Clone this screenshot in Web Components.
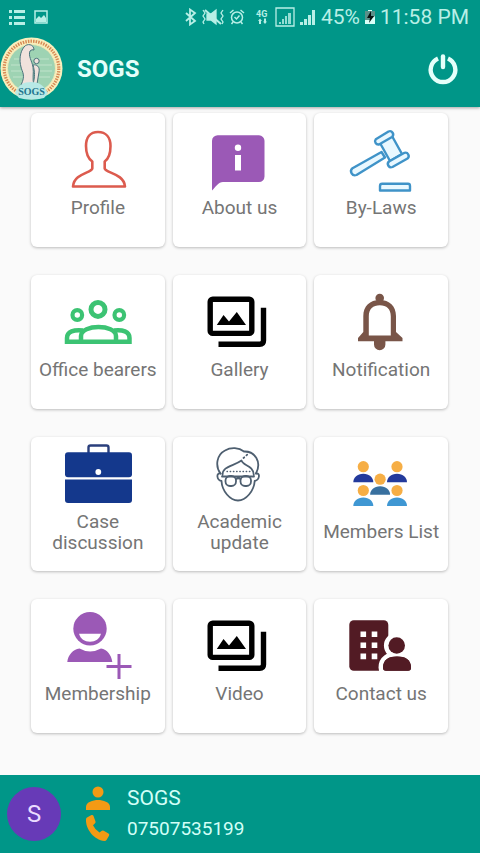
<!DOCTYPE html>
<html lang="en">
<head>
<meta charset="utf-8">
<meta name="viewport" content="width=device-width, initial-scale=1">
<title>SOGS</title>
<style>
    body {
        margin: 0;
        font-family: Roboto, "Liberation Sans", sans-serif;
        background: #fafafa;
    }
</style>
</head>
<body>
<sogs-app>
    <status-bar slot="header" battery="45%" time="11:58 PM"></status-bar>
    <app-bar slot="header">SOGS</app-bar>
    <menu-card icon="profile">Profile</menu-card>
    <menu-card icon="about">About us</menu-card>
    <menu-card icon="laws">By-Laws</menu-card>
    <menu-card icon="bearers">Office bearers</menu-card>
    <menu-card icon="gallery">Gallery</menu-card>
    <menu-card icon="bell">Notification</menu-card>
    <menu-card icon="briefcase">Case discussion</menu-card>
    <menu-card icon="academic">Academic update</menu-card>
    <menu-card icon="members">Members List</menu-card>
    <menu-card icon="membership">Membership</menu-card>
    <menu-card icon="gallery">Video</menu-card>
    <menu-card icon="contact">Contact us</menu-card>
    <user-footer slot="footer" initial="S">
        <span slot="name">SOGS</span>
        <a slot="phone" href="tel:07507535199">07507535199</a>
    </user-footer>
</sogs-app>

<script>
const person = (x, y, fill) => `
    <circle cx="${x}" cy="${y}" r="5.6" fill="#f6ae45"/>
    <path d="M${x - 10} ${y + 15.6}c0-5 4-8.6 10-8.6s10 3.6 10 8.6z" fill="${fill}"/>`;

// all menu icons share a 68x68 box
const ICONS = {
    profile: `
        <path d="M34 7C26 7 22 12.500 22 21C22 29 24 33.500 28.300 36.500V43.500C27.500 48 10 48.500 9 61.500H61C60 48.500 41.500 48 40.700 43.500V36.500C45 33.500 46.500 29 46.500 21C46.500 12.500 42 7 34 7Z"
            fill="none" stroke="#dc5b4e" stroke-width="2.600" stroke-linejoin="round"/>`,
    about: `
        <path d="M13 10.300H54a5.500 5.500 0 0 1 5.500 5.500V51.500a5.500 5.500 0 0 1-5.500 5.500H18C13.500 57 10.500 62 7 65.500V16a5.700 5.700 0 0 1 6-5.700Z" fill="#9b59b6"/>
        <circle cx="33" cy="22.800" r="3.200" fill="#fff"/>
        <path d="M30 30h6v15.500h-6z" fill="#fff"/>`,
    laws: `
        <g fill="#e9f8ff" stroke="#3f93c8" stroke-width="2.400" stroke-linejoin="round">
            <path d="M34.500 27L5.500 43.200A4 4 0 0 0 9.500 50L38 32.500Z"/>
            <path d="M33 18L45 11L55 29L43 36Z"/>
            <path d="M28.800 14.200L41.500 6.500A3.300 3.300 0 0 1 45 12L32 19.500A3.300 3.300 0 0 1 28.800 14.200Z"/>
            <path d="M42 36.500L57.500 27.800A3.300 3.300 0 0 1 60.500 33.500L45.500 42A3.300 3.300 0 0 1 42 36.500Z"/>
            <path d="M33 65.500V61Q33 58.800 35.200 58.800H61Q63 58.800 63 61V65.500Z"/>
        </g>`,
    bearers: `
        <g fill="none" stroke="#3cc373">
            <circle cx="34" cy="22.400" r="7" stroke-width="5"/>
            <circle cx="13.300" cy="28" r="4.800" stroke-width="4.200"/>
            <circle cx="55.300" cy="28" r="4.800" stroke-width="4.200"/>
            <path d="M17 54.500V49C17 43 26 40 34.500 40S52 43 52 49V54.500" stroke-width="4.500"/>
            <path d="M19 43.500C10 42.500 3 44.500 3 51V54.700H65.500V51C65.500 44.500 58.500 42.500 50 43.500" stroke-width="4.500"/>
        </g>`,
    gallery: `
        <rect x="5.200" y="12.200" width="41.600" height="34.200" rx="2.500" fill="none" stroke="#000" stroke-width="5.400"/>
        <path d="M11.800 38L18.500 28L24 34.500L31.800 25L41 38Z"/>
        <path d="M58.500 20.700V53.500Q58.500 57.300 54.700 57.300H13.500" fill="none" stroke="#000" stroke-width="5.400"/>`,
    bell: `
        <g fill="#795548">
            <circle cx="32.700" cy="11" r="4.300"/>
            <path fill-rule="evenodd" d="M16.300 45V29C16.300 19 23 13 32.700 13S49 19 49 29V45L55.500 51V54.300H11V51ZM21.800 48.500H43.800V29.500C43.800 22 39.500 18.300 32.800 18.300S21.800 22 21.800 29.500Z"/>
            <path d="M27 54h11.400v3.500a5.700 5.700 0 0 1-11.400 0z"/>
        </g>`,
    briefcase: `
        <path d="M24.500 14V8.500Q24.500 6.500 26.500 6.500H42.500Q44.500 6.500 44.500 8.500V14" fill="none" stroke="#2a3f7c" stroke-width="2.400"/>
        <rect x="1" y="13.200" width="67" height="25" rx="3" fill="#14388c"/>
        <path d="M1 40.500H68V61a3 3 0 0 1-3 3H4a3 3 0 0 1-3-3Z" fill="#14388c"/>
        <circle cx="34.300" cy="33" r="2.900" fill="#fff"/>`,
    academic: `
        <g fill="none" stroke="#4e5f70" stroke-width="1.800" stroke-linecap="round" stroke-linejoin="round">
            <path d="M15.500 34.500C10 27 11.500 16 20 11.500C26 8 34 8.500 39 12.500C50 12 57 23 51 34.500"/>
            <path d="M17.500 36C17.500 27 28 27.500 36.500 21.500C38 27 48.500 26 48.800 36"/>
            <path d="M38.500 19L44 14" stroke-dasharray="1 3"/>
            <path d="M22 32.500H45" stroke-width="1.300" stroke-dasharray="0.500 2.700"/>
            <path d="M15.500 34.500C11 33.500 11.500 41 16.500 42C17 52 25 61.500 33 61.500S49 52 49.700 42C54.700 41 55.500 33.500 51 34.500"/>
            <rect x="20.500" y="37" width="10.500" height="10" rx="4.500"/>
            <rect x="35.500" y="37" width="10.500" height="10" rx="4.500"/>
            <path d="M17 37.500H49M31 40Q33.200 38.500 35.500 40"/>
        </g>`,
    members:
        person(16.300, 17.700, "#233a9c") + person(50, 17.700, "#233a9c") +
        person(16.300, 41.500, "#3f97d3") + person(50, 41.500, "#3f97d3") +
        person(33.100, 30.200, "#39709f"),
    membership: `
        <g fill="#9b59b6">
            <circle cx="26" cy="17.700" r="16.700"/>
            <path d="M3.300 51C4 44 9 38.500 15.500 37.500Q26 43.500 37 37.500C43 38.500 47.500 44 48.300 51Z"/>
            <path d="M53.500 43h3v11h11v3h-11v11h-3v-11h-11v-3h11z"/>
        </g>
        <path d="M15 22.800H37C35.500 28 31.500 30.800 26 30.800S16.500 28 15 22.800Z" fill="#fff"/>`,
    contact: `
        <rect x="2.300" y="9.300" width="39" height="50.500" rx="4.500" fill="#521b24"/>
        <path d="M13.500 20.500h5.600v5.600h-5.600zM24.700 20.500h5.600v5.600h-5.600zM13.500 31.500h5.600v5.600h-5.600zM24.700 31.500h5.600v5.600h-5.600zM13.500 42.600h5.600v5.600h-5.600zM24.700 42.600h5.600v5.600h-5.600z" fill="#fff"/>
        <g fill="#521b24" stroke="#fff" stroke-width="9" paint-order="stroke">
            <path d="M36 56.500C36 49 42 45.300 50 45.300S64 49 64 56.500Q64 59.700 61 59.700H39Q36 59.700 36 56.500Z"/>
            <circle cx="49.700" cy="34.500" r="8.300"/>
        </g>
        <path d="M36 56.500C36 49 42 45.300 50 45.300S64 49 64 56.500Q64 59.700 61 59.700H39Q36 59.700 36 56.500Z" fill="#521b24"/>`
};

class SogsApp extends HTMLElement {
    constructor() {
        super();
        this.attachShadow({ mode: "open" });

        this.shadowRoot.innerHTML = `
            <style>
                :host {
                    display: flex;
                    flex-direction: column;
                    min-height: 100vh;
                }

                header {
                    background: #009688;
                    box-shadow: 0 1px 3px rgba(0, 0, 0, 0.35);
                }

                main {
                    flex: 1;
                    display: grid;
                    grid-template-columns: repeat(3, 1fr);
                    align-content: start;
                    gap: 28px 8px;
                    padding: 6px 32px 32px 31px;
                }
            </style>

            <header><slot name="header"></slot></header>
            <main><slot></slot></main>
            <slot name="footer"></slot>
        `;
    }
}
customElements.define("sogs-app", SogsApp);

class StatusBar extends HTMLElement {
    constructor() {
        super();
        this.attachShadow({ mode: "open" });

        this.shadowRoot.innerHTML = `
            <style>
                :host {
                    display: flex;
                    justify-content: space-between;
                    align-items: center;
                    height: 34px;
                    padding: 0 11px 0 8px;
                    color: #b8efe6;
                    font-size: 21px;
                    line-height: 24px;
                }

                div {
                    display: flex;
                    align-items: center;
                    gap: 4px;
                }

                .left {
                    gap: 8px;
                }

                svg {
                    display: block;
                }

                .mobile {
                    margin: 0 2px 0 6px;
                }
            </style>

            <div class="left">
                <svg width="18" height="16" fill="currentColor"><path d="M1 1h3v3H1zM6 1h11v3H6zM1 7h3v3H1zM6 7h11v3H6zM1 13h3v3H1zM6 13h11v3H6z"/></svg>
                <svg width="14" height="14"><path d="M1 1h12v12H1z" fill="none" stroke="currentColor" stroke-width="1.500"/><path d="M2 12V9l3-3 2 2 3-3 2 3v4z" fill="currentColor"/></svg>
            </div>
            <div>
                <svg width="13" height="18" fill="none" stroke="currentColor" stroke-width="1.800"><path d="M2 5l9 8-5 3.500v-15L11 5l-9 8"/></svg>
                <svg width="24" height="18" fill="none" stroke="currentColor" stroke-width="1.300"><path d="M2 2l2 3-2 3 2 3-2 3 1 2M22 2l-2 3 2 3-2 3 2 3-1 2"/><path d="M6 6h4l5-4v14l-5-4H6z" fill="currentColor"/><path d="M4 2l16 14" stroke-width="2"/></svg>
                <svg width="16" height="18" fill="none" stroke="currentColor" stroke-width="1.500"><circle cx="8" cy="9.500" r="5.500"/><path d="M1 5l3.500-3M15 5l-3.500-3M4 14l-1.500 2M12 14l1.500 2M5.500 9l2 2 3-3.500"/></svg>
                <svg class="mobile" width="14" height="18" fill="currentColor"><text x="1" y="9" font-size="9" font-weight="700">4G</text><path d="M3 13l2-2.500L7 13H6v3H4v-3zM9 10.500h2v3h1l-2 2.500-2-2.500h1z"/></svg>
                <svg width="20" height="20" fill="currentColor"><path d="M1 1h18v18H1z" fill="none" stroke="currentColor" stroke-width="1.300"/><path d="M4 15h2v2H4zM7 12h2v5H7zM10 9h2v8h-2zM13 6h3v11h-3z" opacity="0.800"/></svg>
                <svg width="18" height="18" fill="currentColor"><path d="M1 14h3v3H1zM5 11h3v6H5zM9 7h3v10H9zM13 2h3v15h-3z"/></svg>
                <span>${this.getAttribute("battery")}</span>
                <svg width="12" height="16"><path d="M4 1h4v1h3v13H1V2h3z" fill="#d9fff8"/><path d="M1 2h10v5L6 11H1z" fill="#5b9089"/><path d="M7 2L3 9h3l-1 5 5-7H7z" fill="#06110f"/></svg>
                <time>${this.getAttribute("time")}</time>
            </div>
        `;
    }
}
customElements.define("status-bar", StatusBar);

class AppBar extends HTMLElement {
    constructor() {
        super();
        this.attachShadow({ mode: "open" });

        this.shadowRoot.innerHTML = `
            <style>
                :host {
                    display: flex;
                    align-items: center;
                    gap: 14px;
                    height: 73px;
                    padding: 0 20px 3px 0;
                    box-sizing: border-box;
                    color: #e4fffa;
                }

                h1 {
                    flex: 1;
                    margin: 0;
                    font-size: 24px;
                    line-height: 28px;
                }

                svg {
                    display: block;
                }

                button {
                    padding: 0;
                    border: 0;
                    background: none;
                    color: inherit;
                    cursor: pointer;
                }
            </style>

            <svg width="63" height="64" viewBox="0 0 63 64">
                <circle cx="31.500" cy="31.500" r="31" fill="#f8efbd"/>
                <circle cx="31.500" cy="31.500" r="27.300" fill="none" stroke="#d78a55" stroke-width="3.200" stroke-dasharray="1.500 1.100"/>
                <circle cx="31.500" cy="31.500" r="24" fill="#9ed3b3" stroke="#f2e9b4" stroke-width="1"/>
                <path d="M14 22h35M11 28h41M11 34h41M13 40h37" stroke="#b5dec3" stroke-width="1.500"/>
                <g fill="#f0e2dc" stroke="#49737c" stroke-width="1">
                    <path d="M34 13C34 7 27 6 24 10C20 15 19 23 21 30C22 35 26 38 21 48H34C32 42 34 36 33 30C32 24 28 19 30 14Q32 12 34 13Z"/>
                    <path d="M33 28C37 27 40 30 39 35L37 47H33C35 40 35 35 33 28Z"/>
                    <circle cx="36.500" cy="24" r="2.700"/>
                </g>
                <path d="M15 56C18 48 24 45 31 45S44 48 48 56L44 61Q31 64 19 61Z" fill="#b8e9e6"/>
                <text x="31.500" y="58" font-size="10" font-weight="700" font-family="Liberation Serif, serif" text-anchor="middle" fill="#21748e">SOGS</text>
            </svg>
            <h1><slot></slot></h1>
            <button type="button" aria-label="Log out">
                <svg width="34" height="34" fill="none" stroke="currentColor" stroke-width="4.400">
                    <path d="M12 6.500A12.300 12.300 0 1 0 22 6.500"/>
                    <path d="M17 4.500V15" stroke-linecap="round"/>
                </svg>
            </button>
        `;
    }
}
customElements.define("app-bar", AppBar);

class MenuCard extends HTMLElement {
    constructor() {
        super();
        this.attachShadow({ mode: "open" });

        this.shadowRoot.innerHTML = `
            <style>
                :host {
                    display: block;
                }

                button {
                    display: flex;
                    flex-direction: column;
                    align-items: center;
                    justify-content: center;
                    gap: 4px;
                    box-sizing: border-box;
                    width: 100%;
                    height: 134px;
                    padding: 0 4px 17px;
                    border: 0;
                    border-radius: 6px;
                    background: #fff;
                    box-shadow: 0 1px 3px rgba(0, 0, 0, 0.25);
                    color: #757575;
                    font: 19px/21px Roboto, "Liberation Sans", sans-serif;
                    cursor: pointer;
                }

                svg {
                    flex: none;
                    display: block;
                }
            </style>

            <button type="button">
                <svg width="68" height="68" viewBox="0 0 68 68" aria-hidden="true">${ICONS[this.getAttribute("icon")]}</svg>
                <span><slot></slot></span>
            </button>
        `;
    }
}
customElements.define("menu-card", MenuCard);

class UserFooter extends HTMLElement {
    constructor() {
        super();
        this.attachShadow({ mode: "open" });

        this.shadowRoot.innerHTML = `
            <style>
                :host {
                    display: flex;
                    align-items: center;
                    gap: 24px;
                    height: 78px;
                    padding: 0 7px;
                    background: #009688;
                    color: #d2fff7;
                }

                .avatar {
                    display: grid;
                    place-items: center;
                    width: 54px;
                    height: 54px;
                    border-radius: 50%;
                    background: #673ab7;
                    color: #eadcff;
                    font-size: 24px;
                }

                .details {
                    display: grid;
                    grid-template-columns: 26px auto;
                    grid-auto-rows: 30px;
                    align-items: center;
                    gap: 0 16px;
                    padding-bottom: 2px;
                }

                svg {
                    display: block;
                }

                .name {
                    font-size: 21px;
                }

                .phone {
                    font-size: 19px;
                }

                ::slotted(a) {
                    color: inherit;
                    text-decoration: none;
                }
            </style>

            <div class="avatar">${this.getAttribute("initial")}</div>
            <div class="details">
                <svg width="26" height="26" fill="#f39a14"><circle cx="13" cy="7" r="5.500"/><path d="M1 25v-3c0-5 7-7 12-7s12 2 12 7v3z"/></svg>
                <span class="name"><slot name="name"></slot></span>
                <svg width="26" height="28" fill="#f39a14"><path d="M2 3.500L6.500 1Q8 0.500 8.500 2L10.500 7.500Q10.800 8.800 9.800 9.600L8 11.200Q10 15.800 14.500 18.600L16.500 17Q17.500 16.200 18.700 16.800L23.500 19.500Q24.800 20.300 24 21.700L21.500 26Q20.800 27 19.500 27C9 26 0.500 15 1 5.500Q1 4.200 2 3.500Z"/></svg>
                <span class="phone"><slot name="phone"></slot></span>
            </div>
        `;
    }
}
customElements.define("user-footer", UserFooter);
</script>
</body>
</html>
